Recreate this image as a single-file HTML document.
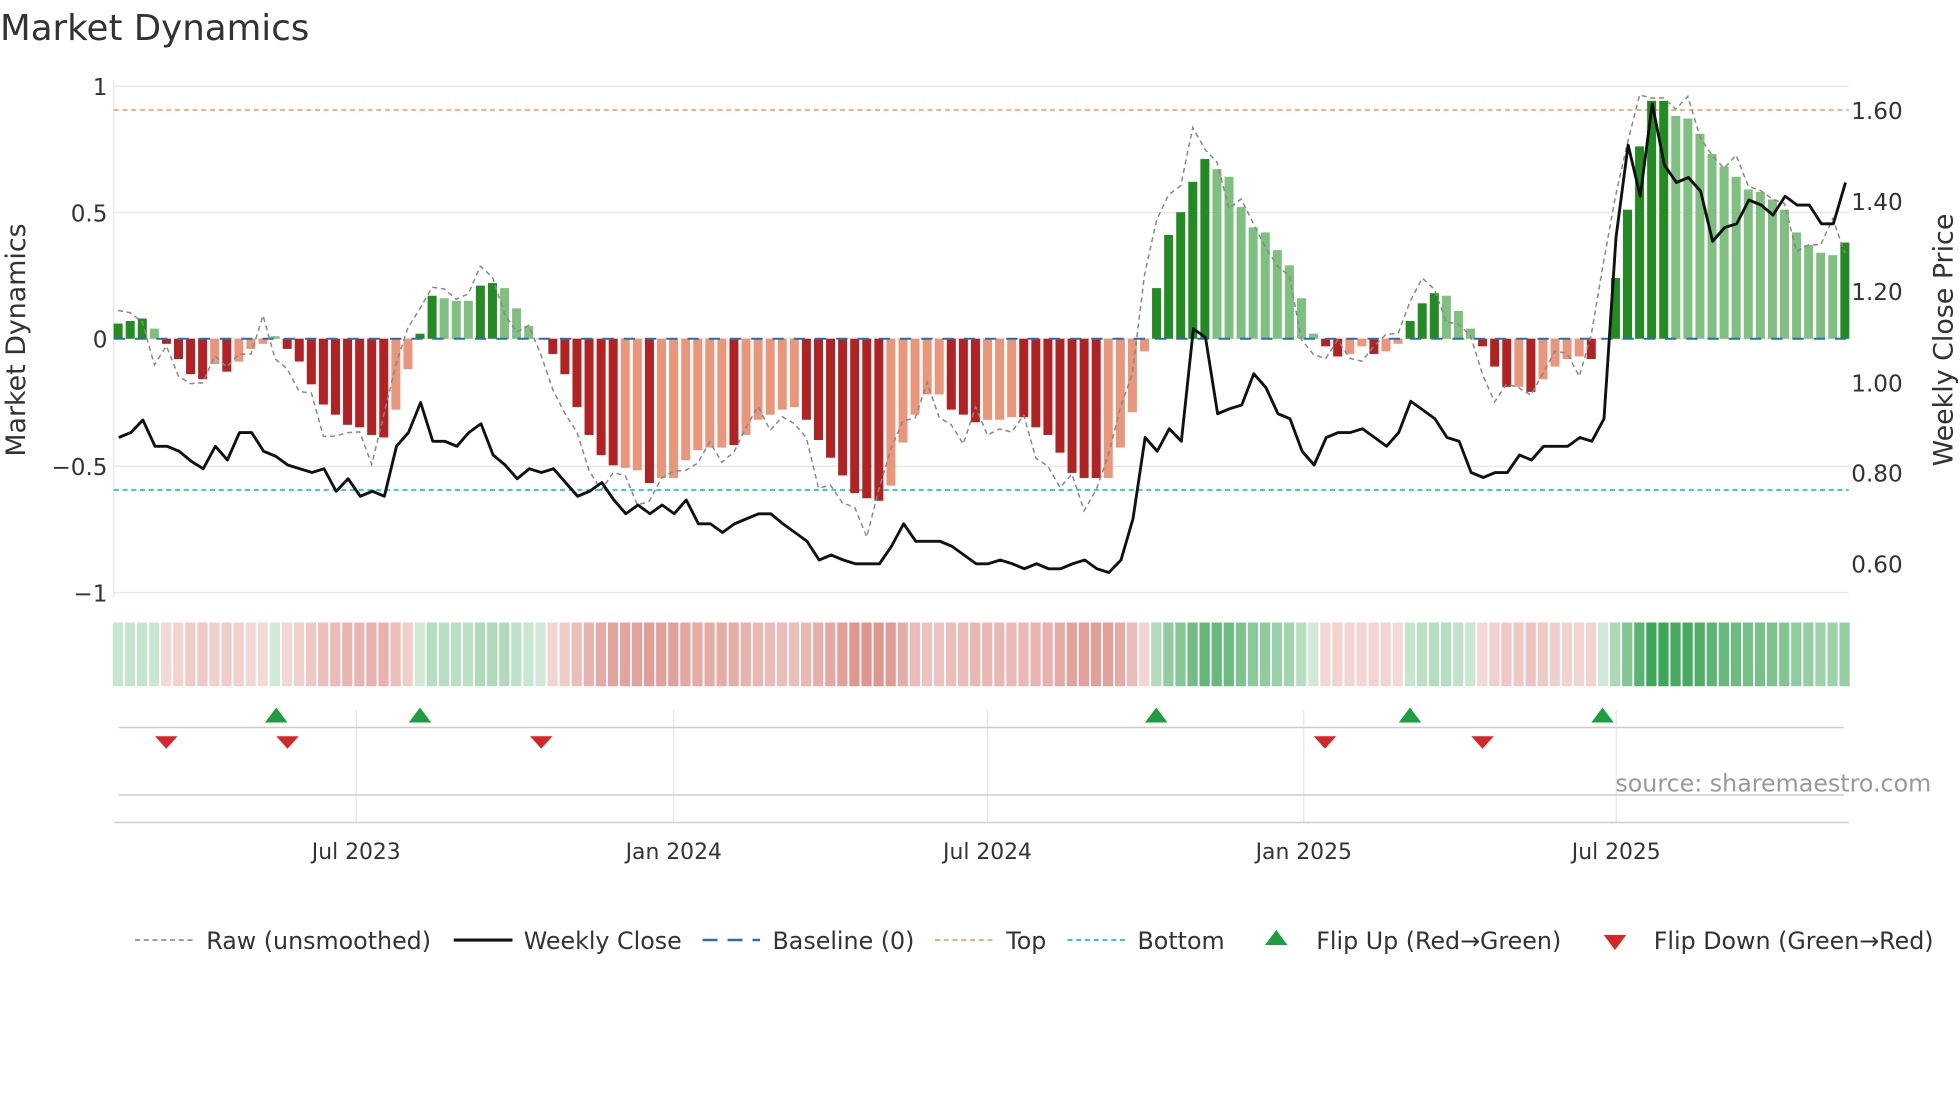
<!DOCTYPE html>
<html><head><meta charset="utf-8"><style>
html,body{margin:0;padding:0;background:#fff;}
svg{display:block;font-family:"DejaVu Sans","Liberation Sans",sans-serif;}
</style></head><body>
<svg id="s" width="1960" height="1102" viewBox="0 0 1568 881.6" xmlns="http://www.w3.org/2000/svg">
<rect width="1568" height="882" fill="#fff"/>
<text x="0" y="32" font-size="28.5" fill="#333">Market Dynamics</text>
<g id="grid" stroke="#e8e8ee" stroke-width="1.2">
<line x1="91" x2="1479" y1="69" y2="69"/><line x1="91" x2="1479" y1="170" y2="170"/>
<line x1="91" x2="1479" y1="271" y2="271"/><line x1="91" x2="1479" y1="373" y2="373"/>
<line x1="91" x2="1479" y1="474" y2="474"/><line x1="91" x2="91" y1="64" y2="478"/>
</g>
<g font-size="18.5" fill="#333" text-anchor="end">
<text x="86" y="76">1</text><text x="86" y="177">0.5</text><text x="86" y="278">0</text>
<text x="86" y="380">−0.5</text><text x="86" y="481">−1</text>
</g>
<g font-size="18.5" fill="#333">
<text x="1481" y="95">1.60</text><text x="1481" y="168">1.40</text><text x="1481" y="240">1.20</text>
<text x="1481" y="313">1.00</text><text x="1481" y="385">0.80</text><text x="1481" y="458">0.60</text>
</g>
<text transform="translate(20,272) rotate(-90)" font-size="21.5" fill="#333" text-anchor="middle">Market Dynamics</text>
<text transform="translate(1562,272) rotate(-90)" font-size="21.5" fill="#333" text-anchor="middle">Weekly Close Price</text>
<line x1="91" x2="1479" y1="88" y2="88" stroke="#f0a868" stroke-width="1.4" stroke-dasharray="4,3"/>
<line x1="91" x2="1479" y1="392" y2="392" stroke="#29c0d0" stroke-width="1.4" stroke-dasharray="4,3"/>
<g id="bars"></g>
<line x1="91" x2="1479" y1="271" y2="271" stroke="#2a6fa8" stroke-width="1.6" stroke-dasharray="9,8"/>
<polyline id="raw" fill="none" stroke="#888" stroke-width="1.2" stroke-dasharray="4,3"/>
<polyline id="close" fill="none" stroke="#111" stroke-width="2.3" stroke-linejoin="round"/>
<g id="heat"></g>
<g stroke="#e6e6e6" stroke-width="1">
<line x1="285" x2="285" y1="568" y2="658"/><line x1="539" x2="539" y1="568" y2="658"/>
<line x1="790" x2="790" y1="568" y2="658"/><line x1="1043" x2="1043" y1="568" y2="658"/>
<line x1="1293" x2="1293" y1="568" y2="658"/>
</g>
<line x1="95" x2="1475" y1="582" y2="582" stroke="#ccc" stroke-width="1.2"/>
<line x1="95" x2="1475" y1="636" y2="636" stroke="#ccc" stroke-width="1.2"/>
<line x1="91" x2="1479" y1="658" y2="658" stroke="#ccc" stroke-width="1.2"/>
<g id="flips"></g>
<text x="1545" y="633" font-size="19" fill="#999" text-anchor="end">source: sharemaestro.com</text>
<g font-size="17.5" fill="#333" text-anchor="middle">
<text x="285" y="687">Jul 2023</text><text x="539" y="687">Jan 2024</text><text x="790" y="687">Jul 2024</text>
<text x="1043" y="687">Jan 2025</text><text x="1293" y="687">Jul 2025</text>
</g>
<g font-size="19" fill="#333">
<line x1="108" x2="154" y1="752" y2="752" stroke="#888" stroke-width="1.3" stroke-dasharray="4,3"/>
<text x="165" y="759">Raw (unsmoothed)</text>
<line x1="363" x2="410" y1="752" y2="752" stroke="#111" stroke-width="2.5"/>
<text x="419" y="759">Weekly Close</text>
<line x1="562" x2="608" y1="752" y2="752" stroke="#2a6fa8" stroke-width="2" stroke-dasharray="12,8"/>
<text x="618" y="759">Baseline (0)</text>
<line x1="748" x2="794" y1="752" y2="752" stroke="#f0a868" stroke-width="1.5" stroke-dasharray="4,3"/>
<text x="805" y="759">Top</text>
<line x1="854" x2="900" y1="752" y2="752" stroke="#29c0d0" stroke-width="1.5" stroke-dasharray="4,3"/>
<text x="910" y="759">Bottom</text>
<path d="M1021 744 L1030 756 L1012 756 Z" fill="#1e9e40"/>
<text x="1053" y="759">Flip Up (Red→Green)</text>
<path d="M1283 748 L1301 748 L1292 760 Z" fill="#d62728"/>
<text x="1323" y="759">Flip Down (Green→Red)</text>
</g>
</svg>
<script>
var D=[[.06,'g'],[.07,'g'],[.08,'g'],[.04,'l'],[-.02,'r'],[-.08,'r'],[-.14,'r'],[-.16,'r'],[-.10,'s'],[-.13,'r'],[-.09,'s'],[-.04,'s'],[-.02,'s'],[.01,'l'],[-.04,'r'],[-.09,'r'],[-.18,'r'],[-.26,'r'],[-.30,'r'],[-.34,'r'],[-.35,'r'],[-.38,'r'],[-.39,'r'],[-.28,'s'],[-.12,'s'],[.02,'g'],[.17,'g'],[.16,'l'],[.15,'l'],[.15,'l'],[.21,'g'],[.22,'g'],[.20,'l'],[.12,'l'],[.05,'l'],[0,'l'],[-.06,'r'],[-.14,'r'],[-.27,'r'],[-.38,'r'],[-.46,'r'],[-.50,'r'],[-.51,'s'],[-.52,'s'],[-.57,'r'],[-.55,'s'],[-.55,'s'],[-.48,'s'],[-.44,'s'],[-.43,'s'],[-.43,'s'],[-.42,'r'],[-.38,'s'],[-.32,'s'],[-.30,'s'],[-.28,'s'],[-.27,'s'],[-.32,'r'],[-.40,'r'],[-.47,'r'],[-.54,'r'],[-.61,'r'],[-.63,'r'],[-.64,'r'],[-.58,'s'],[-.41,'s'],[-.30,'s'],[-.22,'s'],[-.22,'s'],[-.28,'r'],[-.30,'r'],[-.33,'r'],[-.32,'s'],[-.32,'s'],[-.31,'s'],[-.31,'r'],[-.35,'r'],[-.38,'r'],[-.45,'r'],[-.53,'r'],[-.55,'r'],[-.55,'r'],[-.55,'s'],[-.43,'s'],[-.29,'s'],[-.05,'s'],[.20,'g'],[.41,'g'],[.50,'g'],[.62,'g'],[.71,'g'],[.67,'l'],[.64,'l'],[.52,'l'],[.44,'l'],[.42,'l'],[.35,'l'],[.29,'l'],[.16,'l'],[.02,'l'],[-.03,'r'],[-.07,'r'],[-.06,'s'],[-.03,'s'],[-.06,'r'],[-.05,'s'],[-.02,'s'],[.07,'g'],[.14,'g'],[.18,'g'],[.17,'l'],[.11,'l'],[.04,'l'],[-.03,'r'],[-.11,'r'],[-.19,'r'],[-.19,'s'],[-.21,'r'],[-.16,'s'],[-.11,'s'],[-.08,'s'],[-.07,'s'],[-.08,'r'],[0,'l'],[.24,'g'],[.51,'g'],[.76,'g'],[.94,'g'],[.94,'g'],[.88,'l'],[.87,'l'],[.81,'l'],[.73,'l'],[.68,'l'],[.64,'l'],[.59,'l'],[.58,'l'],[.55,'l'],[.51,'l'],[.42,'l'],[.37,'l'],[.34,'l'],[.33,'l'],[.38,'g']];
var C={g:'#228b22',l:'#7fbf7f',r:'#b22222',s:'#e9967a'};
var NS='http://www.w3.org/2000/svg';
function el(p,t,a){var e=document.createElementNS(NS,t);for(var k in a)e.setAttribute(k,a[k]);p.appendChild(e);}
var bars=document.getElementById('bars'),heat=document.getElementById('heat'),raw=[];
D.forEach(function(d,i){var x=94.5+i*9.66,v=d[0],h=Math.abs(v)*202.5,y=v>=0?271-h:271;
el(bars,'rect',{x:x-3.6,y:y,width:7.2,height:Math.max(h,.5),fill:C[d[1]]});
var a=Math.abs(v),col=v>=0?'rgba(46,158,74,'+(0.22+0.75*a).toFixed(2)+')':'rgba(192,57,43,'+(0.18+0.55*a).toFixed(2)+')';
el(heat,'rect',{x:x-4.3,y:498,width:8.2,height:51,fill:col});
var n=D[Math.min(i+1,D.length-1)][0];var r=n*1.1+0.05*Math.sin(i*1.7)+0.035*Math.cos(i*3.1);
if(r>0.97)r=0.97-0.02*Math.sin(i);
raw.push(x.toFixed(1)+','+(271-r*202.5).toFixed(1));});
document.getElementById('raw').setAttribute('points',raw.join(' '));
var P=[350,346,336,357,357,361,369,375,357,368,346,346,361,365,372,375,378,375,393,383,397,393,397,357,346,322,353,353,357,346,339,364,372,383,375,378,375,386,397,393,386,400,411,404,411,404,411,400,419,419,426,419,415,411,411,419,426,433,448,444,448,451,451,451,437,419,433,433,433,437,444,451,451,448,451,455,451,455,455,451,448,455,458,448,415,350,361,343,353,263,270,331,327,324,299,310,331,335,361,372,350,346,346,343,350,357,346,321,328,335,350,353,378,382,378,378,364,368,357,357,357,350,353,335,190,116,157,83,132,146,142,153,193,182,179,160,164,172,157,164,164,179,179,146];
document.getElementById('close').setAttribute('points',P.map(function(y,i){return (95+i*9.66).toFixed(1)+','+y}).join(' '));
var f=document.getElementById('flips');
[221,336,925,1128,1282].forEach(function(x){el(f,'path',{d:'M'+x+' 566 L'+(x+9)+' 578 L'+(x-9)+' 578 Z',fill:'#1e9e40'});});
[133,230,433,1060,1186].forEach(function(x){el(f,'path',{d:'M'+(x-9)+' 589 L'+(x+9)+' 589 L'+x+' 599 Z',fill:'#d62728'});});
</script>
</body></html>
